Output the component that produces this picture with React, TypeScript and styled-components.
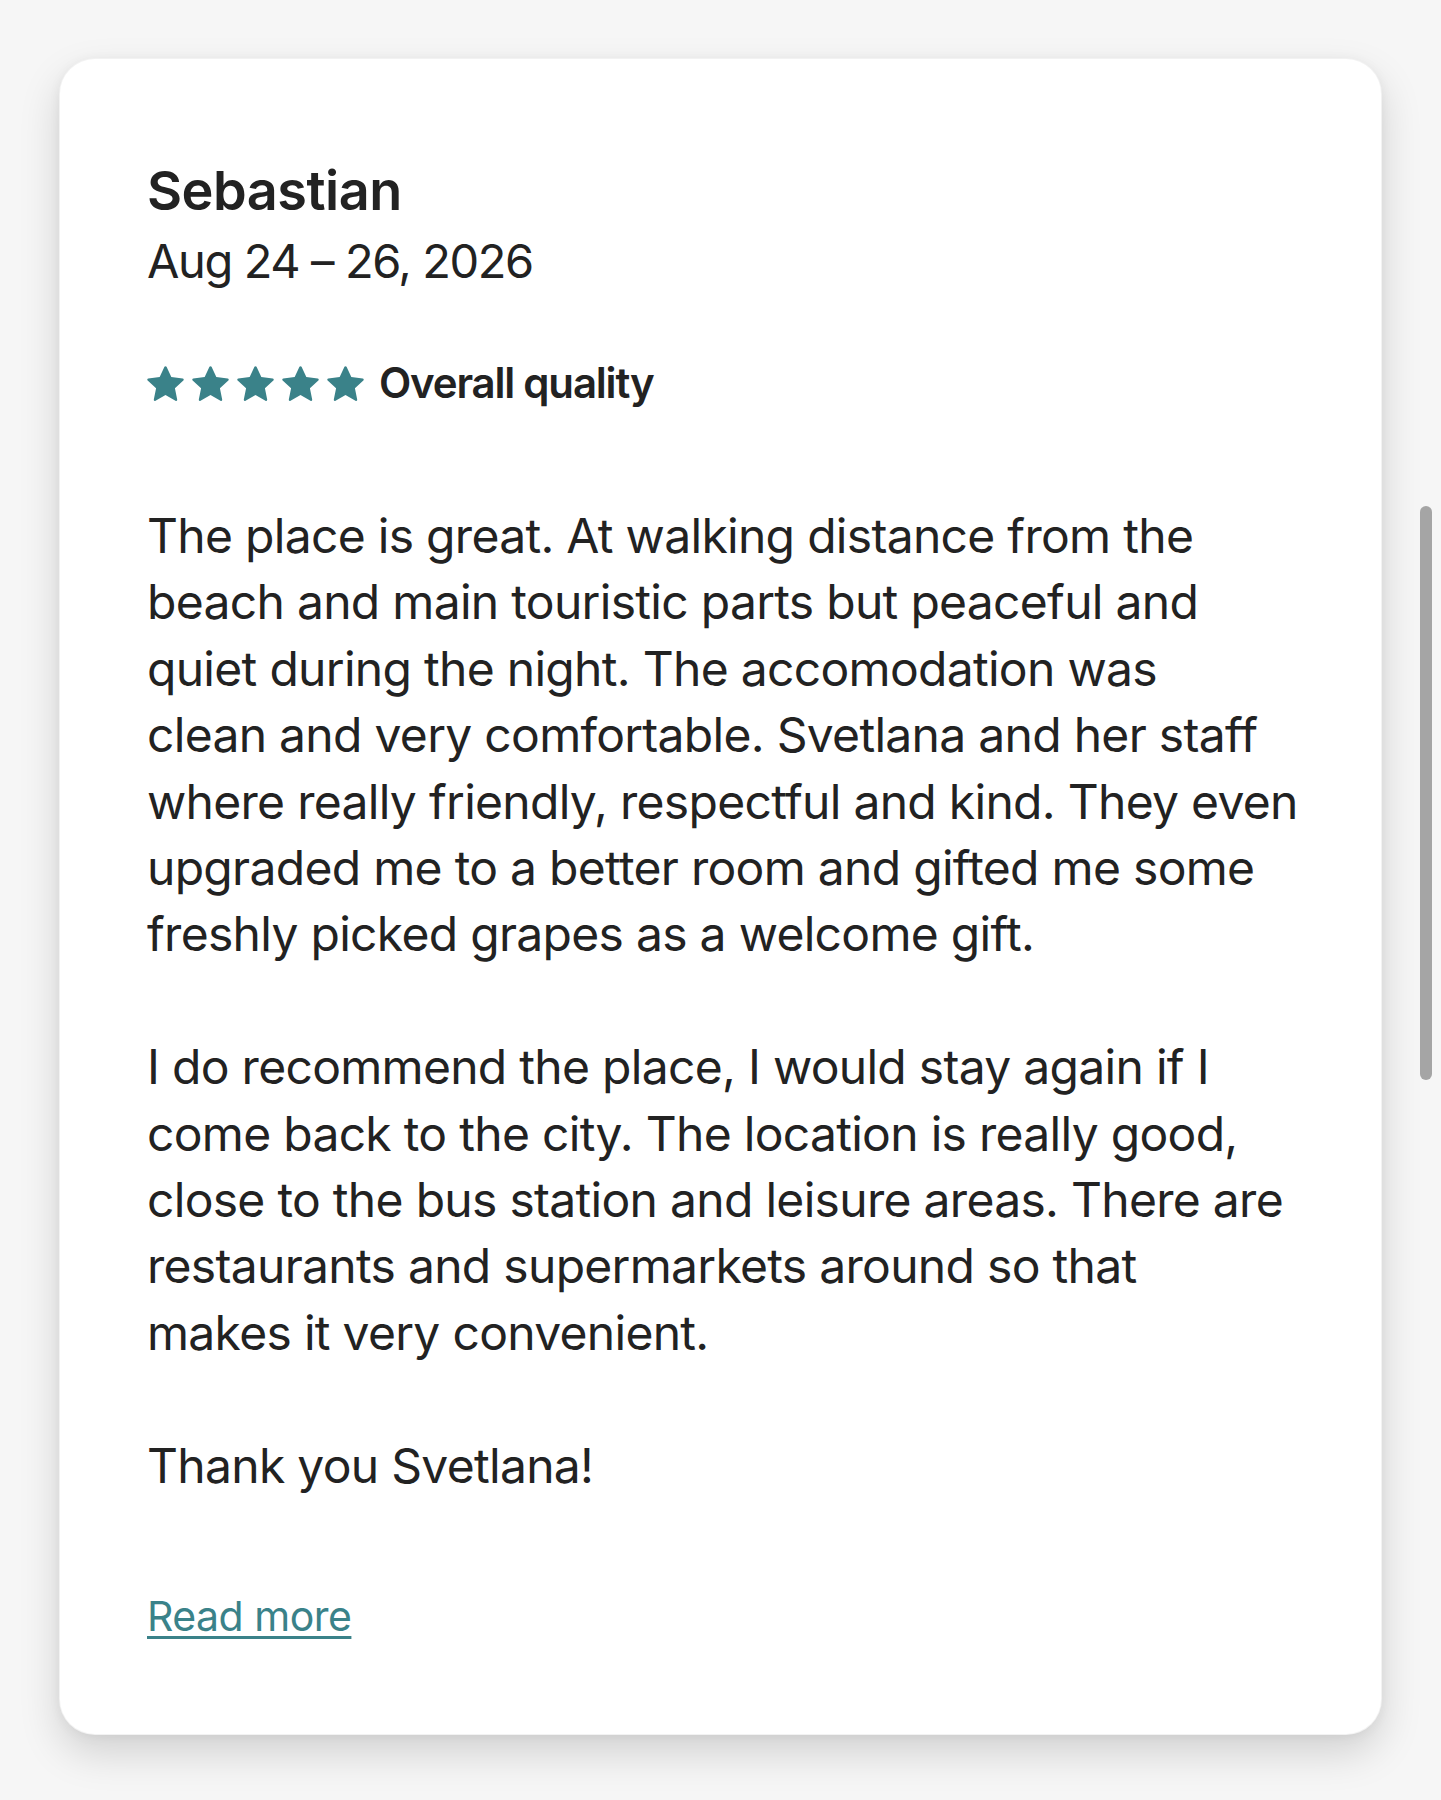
import React from 'react';
import styled, { createGlobalStyle } from 'styled-components';

const GlobalStyle = createGlobalStyle`
  html, body {
    margin: 0;
    padding: 0;
    background: #f6f6f6;
  }
  body {
    font-family: Inter, "Liberation Sans", sans-serif;
    color: #222222;
    -webkit-font-smoothing: antialiased;
  }
`;

const teal = '#3a8289';

const Page = styled.div`
  min-height: 1800px;
  padding: 58px 0 0 59px;
  box-sizing: border-box;
`;

const Card = styled.article`
  width: 1323px;
  height: 1677px;
  box-sizing: border-box;
  padding: 100px 88px 90px 87px;
  background: #ffffff;
  border-radius: 36px;
  border: 1px solid rgba(0, 0, 0, 0.05);
  box-shadow: 0 18px 40px rgba(0, 0, 0, 0.15), 0 2px 12px rgba(0, 0, 0, 0.05);
  display: flex;
  flex-direction: column;
`;

const Name = styled.h2`
  margin: 0;
  font-size: 54px;
  line-height: 64px;
  font-weight: 600;
  letter-spacing: -0.5px;
`;

const Dates = styled.div`
  margin-top: 4px;
  font-size: 47px;
  line-height: 68px;
  font-weight: 400;
  letter-spacing: -1.4px;
`;

const Rating = styled.div`
  margin-top: 63px;
  height: 50px;
  display: flex;
  align-items: center;
  gap: 15px;
`;

const Stars = styled.div`
  display: flex;
  gap: 8px;
`;

const Star = styled.svg`
  width: 37px;
  height: 37px;
  display: block;
  fill: ${teal};
`;

const RatingLabel = styled.span`
  font-size: 42px;
  line-height: 50px;
  font-weight: 600;
  letter-spacing: -1.2px;
`;

const Body = styled.div`
  margin-top: 95px;
  font-size: 48px;
  line-height: 66.4px;
  font-weight: 400;
  letter-spacing: -0.7px;
`;

const Paragraph = styled.p`
  margin: 0 0 66.4px;
  &:last-child {
    margin-bottom: 0;
  }
`;

const Line = styled.span`
  display: block;
  white-space: nowrap;
`;

const ReadMore = styled.a`
  margin-top: 91px;
  align-self: flex-start;
  font-size: 41px;
  line-height: 52px;
  color: ${teal};
  text-decoration: underline;
  text-decoration-thickness: 3px;
  text-underline-offset: 5px;
  letter-spacing: -0.5px;
  cursor: pointer;
`;

const ScrollThumb = styled.div`
  position: absolute;
  left: 1420px;
  top: 506px;
  width: 12px;
  height: 574px;
  border-radius: 6px;
  background: #a5a5a5;
`;

const StarIcon = () => (
  <Star viewBox="0 0 32 32" aria-hidden="true">
    <path d="M15.094 1.579l-4.124 8.885-9.86 1.27a1 1 0 0 0-.542 1.736l7.293 6.565-1.965 9.852a1 1 0 0 0 1.483 1.061L16 25.951l8.625 4.997a1 1 0 0 0 1.482-1.06l-1.965-9.853 7.293-6.565a1 1 0 0 0-.541-1.735l-9.86-1.271-4.127-8.885a1 1 0 0 0-1.814 0z" />
  </Star>
);

const review: string[][] = [
  [
    'The place is great. At walking distance from the',
    'beach and main touristic parts but peaceful and',
    'quiet during the night. The accomodation was',
    'clean and very comfortable. Svetlana and her staff',
    'where really friendly, respectful and kind. They even',
    'upgraded me to a better room and gifted me some',
    'freshly picked grapes as a welcome gift.',
  ],
  [
    'I do recommend the place, I would stay again if I',
    'come back to the city. The location is really good,',
    'close to the bus station and leisure areas. There are',
    'restaurants and supermarkets around so that',
    'makes it very convenient.',
  ],
  ['Thank you Svetlana!'],
];

export default function App() {
  return (
    <>
      <GlobalStyle />
      <Page>
        <Card>
          <Name>Sebastian</Name>
          <Dates>Aug 24 – 26, 2026</Dates>
          <Rating>
            <Stars>
              {[0, 1, 2, 3, 4].map((i) => (
                <StarIcon key={i} />
              ))}
            </Stars>
            <RatingLabel>Overall quality</RatingLabel>
          </Rating>
          <Body>
            {review.map((para, i) => (
              <Paragraph key={i}>
                {para.map((line) => (
                  <Line key={line}>{line}</Line>
                ))}
              </Paragraph>
            ))}
          </Body>
          <ReadMore>Read more</ReadMore>
        </Card>
      </Page>
      <ScrollThumb />
    </>
  );
}
